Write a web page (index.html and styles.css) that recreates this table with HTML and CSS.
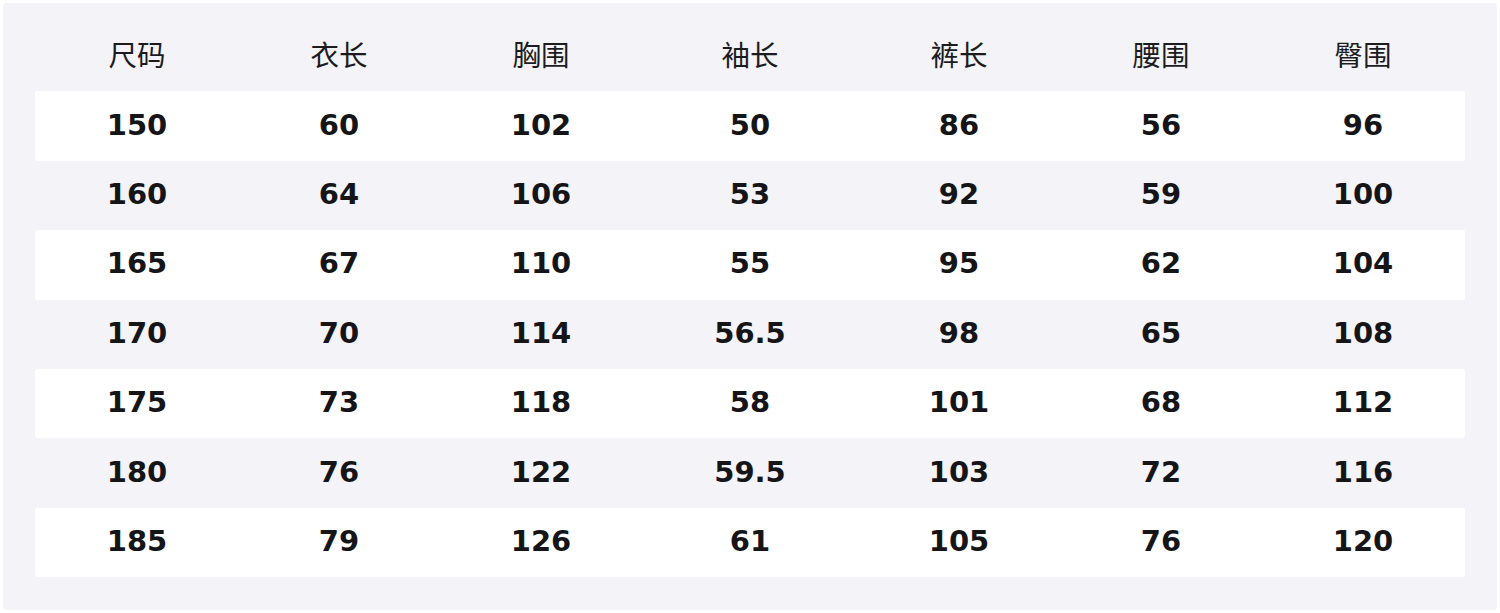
FILE: index.html
```html
<!DOCTYPE html>
<html lang="zh">
<head>
<meta charset="utf-8">
<link rel="stylesheet" href="styles.css">
</head>
<body>
<div class="panel">
  <div class="table">
    <div class="row head"><div>尺码</div><div>衣长</div><div>胸围</div><div>袖长</div><div>裤长</div><div>腰围</div><div>臀围</div></div>
    <div class="row odd"><div>150</div><div>60</div><div>102</div><div>50</div><div>86</div><div>56</div><div>96</div></div>
    <div class="row"><div>160</div><div>64</div><div>106</div><div>53</div><div>92</div><div>59</div><div>100</div></div>
    <div class="row odd"><div>165</div><div>67</div><div>110</div><div>55</div><div>95</div><div>62</div><div>104</div></div>
    <div class="row"><div>170</div><div>70</div><div>114</div><div>56.5</div><div>98</div><div>65</div><div>108</div></div>
    <div class="row odd"><div>175</div><div>73</div><div>118</div><div>58</div><div>101</div><div>68</div><div>112</div></div>
    <div class="row"><div>180</div><div>76</div><div>122</div><div>59.5</div><div>103</div><div>72</div><div>116</div></div>
    <div class="row odd"><div>185</div><div>79</div><div>126</div><div>61</div><div>105</div><div>76</div><div>120</div></div>
  </div>
</div>
</body>
</html>
```
FILE: styles.css
```css
html, body {
  margin: 0;
  padding: 0;
  background: #ffffff;
}
body {
  padding: 3px;
  font-family: "DejaVu Sans", "Noto Sans CJK SC", sans-serif;
  color: #151518;
}
.panel {
  background: #f3f3f8;
  border-radius: 4px;
  height: 607px;
  box-sizing: border-box;
  padding: 19px 32px 0 32px;
}
.table {
  display: flex;
  flex-direction: column;
}
.row {
  display: grid;
  grid-template-columns: 204fr 200fr 204fr 214fr 204fr 200fr 204fr;
  height: 69.4px;
  box-sizing: border-box;
  padding-bottom: 3px;
  align-items: center;
  font-size: 29px;
  font-weight: bold;
}
.row > div {
  text-align: center;
}
.row.odd {
  background: #ffffff;
  border-radius: 2px;
}
.row.head {
  font-family: "Noto Sans CJK SC", sans-serif;
  font-weight: normal;
  font-size: 28.5px;
  color: #1c1c1f;
  padding-bottom: 6px;
}
```
